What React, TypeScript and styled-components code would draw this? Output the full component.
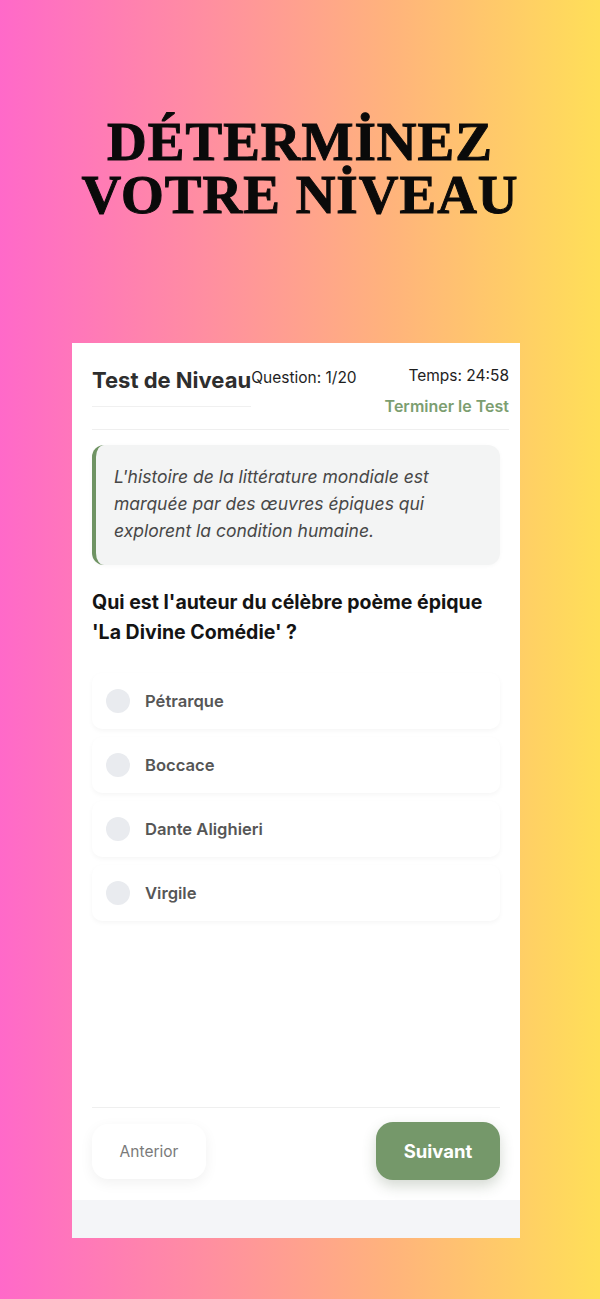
import React, { useState } from 'react';
import { styled, createGlobalStyle } from 'styled-components';

const GlobalStyle = createGlobalStyle`
  html, body {
    margin: 0;
    padding: 0;
  }
  body {
    font-family: Inter, "Noto Sans", "Liberation Sans", sans-serif;
    background: linear-gradient(90deg, #ff69c9 0%, #ff8fa0 35%, #ffb37c 65%, #ffdf58 100%);
    min-height: 1299px;
  }
`

const options = ['Pétrarque', 'Boccace', 'Dante Alighieri', 'Virgile']

function App() {
  const [selected, setSelected] = useState<number | null>(null)

  return (
    <Page>
      <GlobalStyle />
      <Headline>
        <HeadlineLine>DÉTERMİNEZ</HeadlineLine>
        <HeadlineLine>VOTRE NİVEAU</HeadlineLine>
      </Headline>

      <Card>
        <Body>
          <Header>
            <CardTitle>Test de Niveau</CardTitle>
            <Counter>Question: 1/20</Counter>
            <HeaderRight>
              <Timer>Temps: 24:58</Timer>
              <FinishLink>Terminer le Test</FinishLink>
            </HeaderRight>
          </Header>

          <Passage>
            L'histoire de la littérature mondiale est marquée par des œuvres épiques qui
            explorent la condition humaine.
          </Passage>

          <Question>Qui est l'auteur du célèbre poème épique 'La Divine Comédie' ?</Question>

          <OptionList>
            {options.map((label, index) => (
              <Option key={label} onClick={() => setSelected(index)}>
                <Radio $checked={selected === index} />
                <OptionLabel>{label}</OptionLabel>
              </Option>
            ))}
          </OptionList>

          <Spacer />

          <Footer>
            <PrevButton>Anterior</PrevButton>
            <NextButton>Suivant</NextButton>
          </Footer>
        </Body>
        <BottomStrip />
      </Card>
    </Page>
  );
}

export default App;

const Page = styled.div`
  padding-top: 115px;
  min-height: 1299px;
  box-sizing: border-box;
`

const Headline = styled.h1`
  margin: 0;
  text-align: center;
  font-family: "Liberation Serif", "DejaVu Serif", serif;
  font-weight: 700;
  font-size: 55px;
  letter-spacing: 1px;
  color: #0a0a0a;
  -webkit-text-stroke: 1px #0a0a0a;
`

const HeadlineLine = styled.span`
  display: block;
  height: 53px;
  line-height: 53px;
`

const Card = styled.div`
  margin: 122px 0 0 72px;
  width: 448px;
  height: 895px;
  background: #ffffff;
  display: flex;
  flex-direction: column;
`

const Body = styled.div`
  flex: 1;
  display: flex;
  flex-direction: column;
  padding: 0 20px;
`

const Header = styled.div`
  display: flex;
  align-items: flex-start;
  padding: 25px 0 13px;
  margin-right: -9px;
  border-bottom: 1px solid #efefef;
`

const CardTitle = styled.div`
  font-size: 22px;
  line-height: 24px;
  font-weight: 700;
  color: #2e2e2e;
  white-space: nowrap;
  padding-bottom: 14px;
  border-bottom: 1px solid #f0f0f0;
`

const Counter = styled.div`
  font-size: 15.5px;
  line-height: 20px;
  color: #1e1e1e;
  white-space: nowrap;
`

const HeaderRight = styled.div`
  margin-left: auto;
  margin-top: -2px;
  text-align: right;
  display: flex;
  flex-direction: column;
  gap: 10px;
`

const Timer = styled.div`
  font-size: 15.5px;
  line-height: 20px;
  color: #1e1e1e;
`

const FinishLink = styled.div`
  font-size: 16px;
  line-height: 20px;
  font-weight: 600;
  color: #7c9e70;
  cursor: pointer;
`

const Passage = styled.p`
  margin: 15px 0 0;
  height: 120px;
  box-sizing: border-box;
  padding: 18px 40px 0 18px;
  background: #f3f4f4;
  border-left: 4px solid #6f9363;
  border-radius: 12px;
  font-style: italic;
  font-size: 17.5px;
  line-height: 27px;
  color: #474747;
  box-shadow: 0 1px 4px rgba(0, 0, 0, 0.03);
`

const Question = styled.h2`
  margin: 22px 0 0;
  font-size: 19.5px;
  line-height: 30px;
  font-weight: 700;
  color: #141414;
`

const OptionList = styled.div`
  margin-top: 26px;
  display: flex;
  flex-direction: column;
  gap: 8px;
`

const Option = styled.div`
  height: 56px;
  display: flex;
  align-items: center;
  gap: 15px;
  padding-left: 14px;
  background: #ffffff;
  border-radius: 10px;
  box-shadow: 0 2px 5px rgba(0, 0, 0, 0.04);
  cursor: pointer;
`

const Radio = styled.span<{ $checked: boolean }>`
  width: 24px;
  height: 24px;
  border-radius: 50%;
  background: ${({ $checked }) => ($checked ? '#76996a' : '#e9ebef')};
  flex-shrink: 0;
`

const OptionLabel = styled.span`
  font-size: 16.6px;
  font-weight: 600;
  color: #565656;
`

const Spacer = styled.div`
  flex: 1;
`

const Footer = styled.div`
  display: flex;
  align-items: center;
  justify-content: space-between;
  border-top: 1px solid #efefef;
  padding: 14px 0 20px;
`

const PrevButton = styled.button`
  width: 114px;
  height: 55px;
  border: none;
  border-radius: 16px;
  background: #ffffff;
  font-family: inherit;
  font-size: 15.5px;
  color: #7a7a7a;
  box-shadow: 0 4px 14px rgba(0, 0, 0, 0.06);
  cursor: pointer;
`

const NextButton = styled.button`
  width: 124px;
  height: 58px;
  border: none;
  border-radius: 17px;
  background: #75986a;
  font-family: inherit;
  font-size: 18.5px;
  font-weight: 700;
  color: #ffffff;
  box-shadow: 0 6px 14px rgba(60, 80, 50, 0.22);
  cursor: pointer;
`

const BottomStrip = styled.div`
  height: 38px;
  background: #f4f5f8;
`
